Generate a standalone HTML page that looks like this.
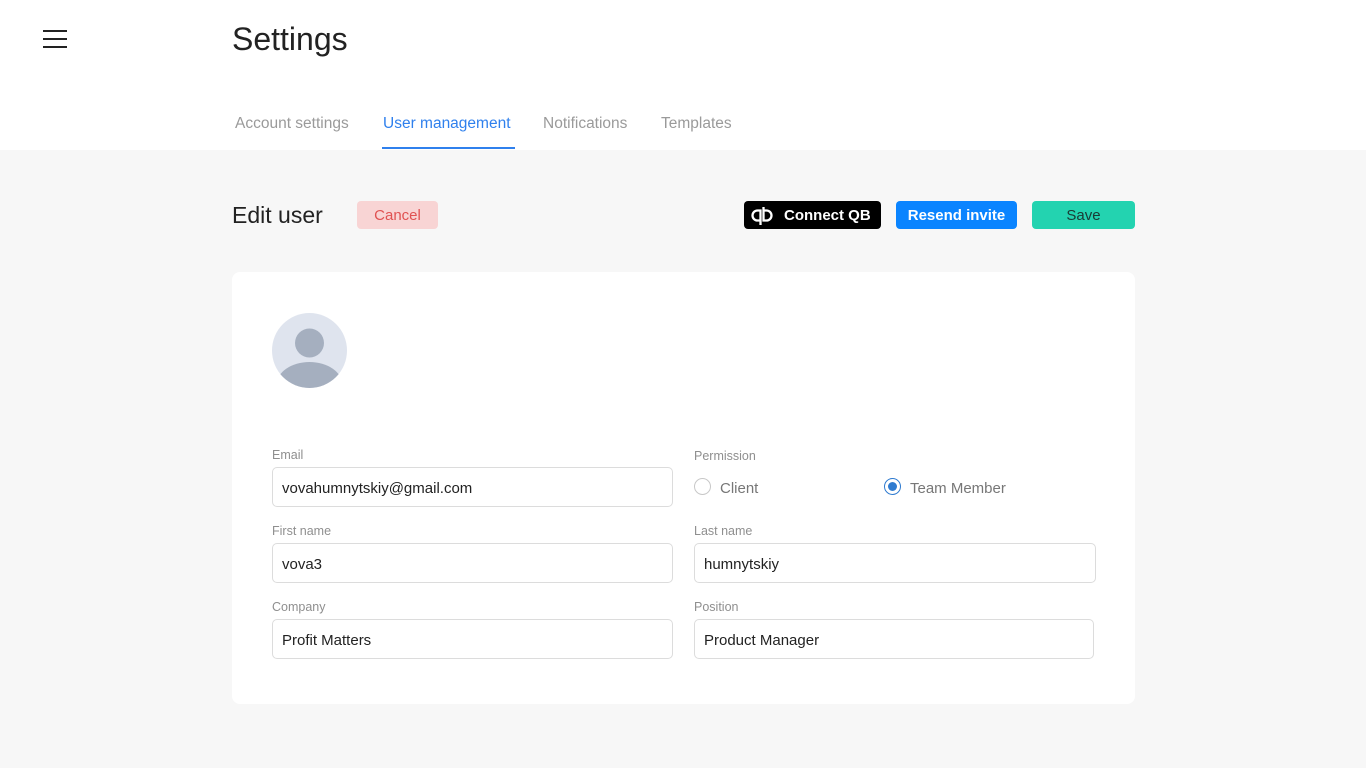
<!DOCTYPE html>
<html><head><meta charset="utf-8"><style>
*{box-sizing:border-box;margin:0;padding:0}
body{width:1366px;height:768px;overflow:hidden;font-family:"Liberation Sans",sans-serif;background:#f7f7f7;position:relative;color:#222}
.top{position:absolute;left:0;top:0;width:1366px;height:150px;background:#fff}
.abs{position:absolute}
.ham span{position:absolute;left:43px;width:24px;height:2px;background:#222}
.tab{position:absolute;top:115px;font-size:15.5px;color:#9a9a9a}
.btn{position:absolute;top:201px;height:28px;border-radius:4px;font-size:15px;display:flex;align-items:center;justify-content:center;padding-top:1px}
.card{position:absolute;left:232px;top:272px;width:903px;height:432px;background:#fff;border-radius:8px}
.lbl{position:absolute;font-size:12.5px;color:#8f8f8f}
.inp{position:absolute;height:40px;border:1px solid #dcdcdc;border-radius:5px;font-size:15px;color:#222;padding-left:9px;line-height:42px}
.radio{position:absolute;width:17px;height:17px;border:1px solid #c8c8c8;border-radius:50%}
</style></head><body>
<div class="top"></div>
<div class="ham"><span style="top:30px"></span><span style="top:38px"></span><span style="top:46px"></span></div>
<div class="abs" style="left:232px;top:21px;font-size:32px;color:#222">Settings</div>
<div class="tab" style="left:235px">Account settings</div>
<div class="tab" style="left:383px;color:#2f80ed">User management</div>
<div class="abs" style="left:382px;top:147px;width:133px;height:2px;background:#2f80ed"></div>
<div class="tab" style="left:543px">Notifications</div>
<div class="tab" style="left:661px">Templates</div>

<div class="abs" style="left:232px;top:202px;font-size:23px;color:#222">Edit user</div>
<div class="btn" style="left:357px;width:81px;background:#f8d4d4;color:#e05252">Cancel</div>
<div class="btn" style="left:744px;width:137px;background:#000;color:#fff;font-weight:bold;justify-content:flex-start;padding-left:6px">
<svg width="24" height="20" viewBox="0 0 24 20" style="margin-right:10px"><path d="M10.5 19V4.5H7.5A5 5 0 0 0 7.5 14.5H10.5M13.5 1V14.5H16.5A5 5 0 0 0 16.5 4.5H13.5" stroke="#fff" stroke-width="2.3" fill="none"/></svg>Connect QB</div>
<div class="btn" style="left:896px;width:121px;background:#0a84ff;color:#fff;font-weight:bold">Resend invite</div>
<div class="btn" style="left:1032px;width:103px;background:#23d3b0;color:#1a3a34">Save</div>

<div class="card"></div>
<svg class="abs" style="left:272px;top:313px" width="75" height="75" viewBox="0 0 75 75"><defs><clipPath id="c"><circle cx="37.5" cy="37.5" r="37.5"/></clipPath></defs><circle cx="37.5" cy="37.5" r="37.5" fill="#dfe4ee"/><g clip-path="url(#c)" fill="#a5afbf"><circle cx="37.5" cy="30" r="14.5"/><ellipse cx="37.5" cy="72" rx="33" ry="23"/></g></svg>

<div class="lbl" style="left:272px;top:448px">Email</div>
<div class="inp" style="left:272px;top:467px;width:401px">vovahumnytskiy@gmail.com</div>
<div class="lbl" style="left:694px;top:449px">Permission</div>
<div class="radio" style="left:694px;top:478px"></div>
<div class="abs" style="left:720px;top:480px;font-size:15px;color:#777">Client</div>
<div class="radio" style="left:884px;top:478px;border-color:#2f7bd0"><div style="position:absolute;left:3px;top:3px;width:9px;height:9px;border-radius:50%;background:#2f7bd0"></div></div>
<div class="abs" style="left:910px;top:480px;font-size:15px;color:#777">Team Member</div>

<div class="lbl" style="left:272px;top:524px">First name</div>
<div class="inp" style="left:272px;top:543px;width:401px">vova3</div>
<div class="lbl" style="left:694px;top:524px">Last name</div>
<div class="inp" style="left:694px;top:543px;width:402px">humnytskiy</div>
<div class="lbl" style="left:272px;top:600px">Company</div>
<div class="inp" style="left:272px;top:619px;width:401px">Profit Matters</div>
<div class="lbl" style="left:694px;top:600px">Position</div>
<div class="inp" style="left:694px;top:619px;width:400px">Product Manager</div>
</body></html>
